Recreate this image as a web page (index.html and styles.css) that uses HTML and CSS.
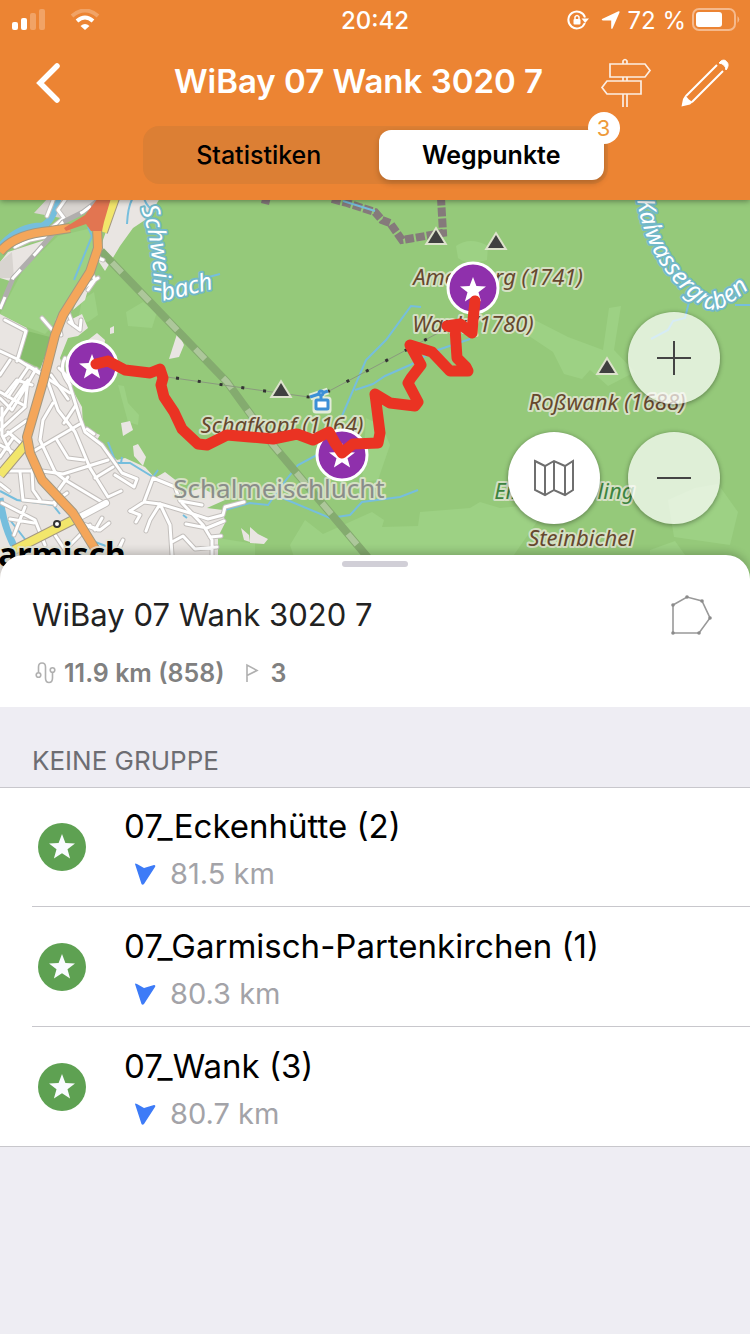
FILE: index.html
```
<!DOCTYPE html>
<html lang="de">
<head>
    <meta charset="UTF-8">
    <meta name="viewport" content="width=device-width, initial-scale=1.0">
    <title>WiBay 07 Wank 3020 7</title>
    <link rel="stylesheet" href="styles.css">
</head>
<body>

    <!-- Shared shapes -->
    <svg class="defs" width="0" height="0" aria-hidden="true">
        <defs>
            <path id="star" d="M0 -13 L3.4 -4 L13 -3.6 L5.5 2.3 L8.1 11.5 L0 6.2 L-8.1 11.5 L-5.5 2.3 L-13 -3.6 L-3.4 -4 Z"/>
            <path id="peak" d="M0 -7 L8 6 H-8 Z"/>
        </defs>
    </svg>

    <header class="header">
        <div class="status-bar">
            <div class="status-left">
                <svg width="34" height="22" viewBox="0 0 34 22" fill="#fff">
                    <rect x="0" y="13" width="6" height="8" rx="2"/>
                    <rect x="9" y="9" width="6" height="12" rx="2"/>
                    <rect x="18" y="4" width="6" height="17" rx="2" opacity=".25"/>
                    <rect x="27" y="0" width="6" height="21" rx="2" opacity=".25"/>
                </svg>
                <svg width="30" height="22" viewBox="0 0 30 22" fill="none" stroke="#fff" stroke-width="4">
                    <path d="M2 7 Q15 -4 28 7" opacity=".25"/>
                    <path d="M7 12 Q15 5 23 12"/>
                    <path d="M15 21 L10.500 17 Q15 13 19.500 17 Z" fill="#fff" stroke="none"/>
                </svg>
            </div>
            <time>20:42</time>
            <div class="status-right">
                <svg width="22" height="20" viewBox="0 0 22 20">
                    <path d="M17.800 13 A8.500 8.500 0 1 1 18 7.500" fill="none" stroke="#fff" stroke-width="2"/>
                    <path d="M14.500 8.500 H22 L18.200 13 Z" fill="#fff"/>
                    <rect x="6.500" y="9" width="7" height="5.500" rx="1" fill="#fff"/>
                    <path d="M8 9 V7 Q10 4 12 7 V9" fill="none" stroke="#fff" stroke-width="1.500"/>
                </svg>
                <svg class="location" width="20" height="20" viewBox="0 0 20 20" fill="#fff"><path d="M1 9 L17.500 1.300 Q19 1 18.500 2.500 L11.500 18.500 Q10.500 19.500 10.200 18 V10.500 H2 Q0 10 1 9 Z"/></svg>
                <span>72 %</span>
                <svg width="48" height="24" viewBox="0 0 48 24">
                    <rect x="1" y="1" width="42" height="21" rx="6" fill="none" stroke="#f5b98c" stroke-width="2"/>
                    <rect x="4" y="4" width="26" height="15" rx="3" fill="#fff"/>
                    <path d="M45.500 8 Q49 11.500 45.500 15 Z" fill="#f5b98c"/>
                </svg>
            </div>
        </div>

        <div class="nav-bar">
            <button type="button" class="nav-btn" aria-label="Zurück">
                <svg width="30" height="44" viewBox="0 0 30 44" fill="none" stroke="#fff" stroke-width="5.500" stroke-linecap="round" stroke-linejoin="miter"><path d="M24 5 L7 22 L24 39"/></svg>
            </button>
            <h1>WiBay 07 Wank 3020 7</h1>
            <div class="nav-actions">
                <button type="button" class="nav-btn" aria-label="Wegweiser">
                    <svg width="52" height="50" viewBox="0 0 52 50" fill="none" stroke="#fbeee4" stroke-width="1.700">
                        <path d="M23 6 V3 Q25 0 27 3 V6 M23 19 V23 M27 19 V23 M23 36 V49 M27 36 V49"/>
                        <path d="M10 6 H45 L50 12.500 L45 19 H10 Z"/>
                        <path d="M41 23 H7 L2 29.500 L7 36 H41 Z"/>
                    </svg>
                </button>
                <button type="button" class="nav-btn" aria-label="Bearbeiten">
                    <svg width="50" height="50" viewBox="0 0 50 50" fill="none" stroke="#fff" stroke-width="2">
                        <path d="M37 7 L6 38 M43 13 L12 44"/>
                        <path d="M5.500 37 Q8 42 13 44 L10 46.500 L1.500 48.500 L3 41 Z" fill="#fff" stroke="none"/>
                        <path d="M39 5 Q43 0 46.500 3.500 Q50 7 46 12 Q45.500 6 39 5 Z" fill="#fff" stroke-width="1"/>
                    </svg>
                </button>
            </div>
        </div>

        <div class="segmented">
            <button type="button" class="segment">Statistiken</button>
            <button type="button" class="segment active">Wegpunkte</button>
            <span class="badge">3</span>
        </div>
    </header>

    <!-- Map -->
    <section class="map">
        <svg class="map-canvas" viewBox="0 200 750 380" preserveAspectRatio="xMidYMid slice" role="img" aria-label="Karte">
            <defs>
                <path id="lbl-schwein" d="M141 208 Q155 245 155 320"/>
                <path id="lbl-bach" d="M163 301 L230 285"/>
                <path id="lbl-kal" d="M637 200 C643 245 668 280 692 299 S722 316 790 250"/>
                <g id="streets">
                    <path d="M5 320 L26 331 L17 361 M0 351 L17 359 L70 393 M0 375 L10 360 M36 369 L24 390 L12 410 L0 398 M29 366 L8 397 M45 375 L25 364 M0 420 L27 381 M0 392 L25 406 L28 380"/>
                    <path d="M2 408 V435 L12 455 M0 430 L25 407 M5 436 L26 421 M0 445 L18 455 L26 441 M8 432 L24 446 M0 457 L13 438 M5 395 L17 380 L32 385"/>
                    <path d="M48 382 L58 410 L75 432 L90 468 L108 497 L121 491 M53 403 L43 420 L40 440 L55 472 L65 480 L105 504 L74 519"/>
                    <path d="M68 380 L80 418 L85 432 L102 445 L122 473 L137 479 L134 487 L115 475 M76 405 L64 423 M87 429 L94 434"/>
                    <path d="M32 452 L80 424 M57 440 L68 458 L84 460 M42 471 L63 474 L108 460 M95 478 L113 467 M68 477 L57 492 L55 505"/>
                    <path d="M7 471 H33 M20 472 L23 500 L53 503 L67 493 M32 470 L33 490 L40 500 M0 484 L9 491 M2 503 L35 520 L45 545 M10 519 L34 523 M25 507 L14 535"/>
                    <path d="M55 535 L65 550 L90 525 M75 521 L100 530 L109 523 M102 518 L95 530 M85 525 L98 530 M123 540 L116 556 M105 575 L123 540"/>
                    <path d="M153 478 L144 502 L130 511 M153 478 L175 487 L180 501 L202 505 M144 502 L160 504 L190 513 L208 519 L223 515 L225 507 L244 502"/>
                    <path d="M160 504 L150 520 L146 531 M160 504 L170 525 L172 555 M186 524 L207 528 L224 521 M172 542 L183 536 L195 549 L217 547 M182 503 L203 525 L212 540 V560 M130 511 L140 515 L136 522 M221 536 L210 537"/>
                    <path d="M51 375 L68 399 M59 368 L73 382 M73 325 L68 312 L58 320 L61 335 M42 318 L55 333 M69 322 L80 330 L81 320 M98 258 L103 260 M90 270 L95 280 L88 290 M83 288 L98 278 M65 358 Q58 370 70 385"/>
                    <path d="M47 216 L54 198 M50 229 L64 218 L58 210 L65 200 M15 247 L30 240 L50 236 L58 225 M105 198 L98 212"/>
                </g>
            </defs>

            <!-- Forest and meadows -->
            <rect class="forest" x="0" y="200" width="750" height="380"/>
            <g class="meadow">
                <path d="M58 236 L92 228 L97 255 L58 320 L45 334 L27 327 L0 314 L24 268 Z"/>
                <path d="M82 300 L94 292 L98 315 L88 322 L78 320 Z M126 312 L143 302 L157 312 L152 328 L128 326 Z"/>
                <path d="M118 385 L124 386 L128 403 L139 415 L138 425 L128 422 Z"/>
                <path d="M456 246 Q470 236 488 246 L487 260 Q468 266 458 258 Z"/>
                <path d="M525 315 L568 337 L603 350 L609 308 L621 306 L614 350 L635 372 L608 386 L590 370 L582 379 L564 374 L553 352 L520 330 Z"/>
                <path d="M305 520 L323 534 L372 512 L384 520 L382 527 L418 526 L420 512 L470 508 L480 502 L500 508 L550 503 L500 575 H300 L290 545 Z"/>
                <path d="M366 418 L382 426 L390 445 L378 480 L362 482 Z"/>
                <path d="M668 500 L695 488 L718 484 L738 512 L730 545 L674 537 Z M650 550 L675 541 L685 555 L680 575 H650 Z"/>
                <path d="M218 538 L255 544 V580 H218 Z"/>
            </g>
            <g class="wood">
                <path d="M27 331 L50 337 L45 370 L18 358 Z"/>
            </g>

            <!-- Built-up land -->
            <g class="town">
                <path d="M0 314 L27 328 L18 358 L40 370 L58 320 L66 302 L72 305 L70 320 L82 314 L88 328 L78 336 L68 338 L60 358 L67 380 L82 407 L83 427 L100 435 L97 440 L117 460 L125 458 L145 467 L155 478 L165 472 L178 482 L181 494 L202 488 L225 500 L207 508 L223 510 L225 523 L218 537 V580 H0 Z"/>
                <path d="M0 262 L8 252 L45 240 L40 250 L20 268 L10 281 L0 278 Z"/>
                <path d="M118 198 H160 L148 218 L133 228 L120 246 L105 271 L99 262 L103 240 Z M98 255 L85 300 L73 310 L92 262 Z"/>
                <path d="M88 340 L97 333 L105 340 L104 350 L86 348 Z M110 328 L114 326 L114 333 L110 334 Z"/>
                <path d="M177 334 L181 338 L184 345 L179 357 L169 359 Z"/>
                <path d="M121 423 L130 421 L133 430 L123 436 Z M133 446 L138 444 L146 457 L143 466 L134 456 Z M72 402 L80 404 V412 Z M250 527 L258 534 L268 539 L264 544 L250 543 Z M241 528 L249 535 L250 542 L244 540 Z"/>
            </g>
            <path class="industry" d="M48 198 H98 L72 220 L34 213 Z M0 262 L12 252 L14 278 L0 278 Z"/>

            <!-- Water -->
            <path class="river" d="M0 247 Q18 226 42 226 Q53 222 58 198"/>
            <path class="river" d="M0 498 Q3 525 15 548"/>
            <g class="stream">
                <path d="M88 227 L92 236 L74 280 M133 198 Q128 205 127 224 M144 198 Q146 206 155 212 M205 278 L220 274"/>
                <path d="M108 442 L116 463 H130 L153 477 L158 470 M121 463 L122 457 M0 491 L17 500 L53 505 L60 514 M10 520 L28 543 M95 542 L106 546 M183 515 L187 518"/>
                <path d="M421 307 L411 306 L386 340 L366 360 L342 416 M470 339 L432 352 L410 365 L385 376 L373 384 L355 390 M330 448 L298 465 L282 485 L268 505 L250 503 L225 510 M280 497 L330 518 L350 515 L362 502 L400 497 L418 490"/>
                <path d="M633 198 L641 202 M690 298 L685 318 L673 321 L668 330 L651 339 M735 305 H750"/>
            </g>

            <!-- Gas corridor and district border -->
            <path class="corridor" d="M101 251 L227 382 L273 445 L370 560"/>
            <path class="corridor-dash" d="M101 251 L227 382 L273 445 L370 560"/>
            <path class="border" d="M332 199 L347 203 L375 212 L382 220 L390 223 L402 240 L443 233 L441 198"/>
            <path class="stream" d="M343 201 L375 211"/>
            <path class="border" d="M262 199 L270 201"/>

            <!-- Roads -->
            <use href="#streets" class="street-case"/>
            <use href="#streets" class="street"/>
            <path class="rail" d="M0 309 L13 278 L37 252 L63 222 L83 212 L100 199"/>
            <path class="rail-dash" d="M0 309 L13 278 L37 252 L63 222 L83 212 L100 199"/>
            <path class="road-case" d="M27 443 L0 475 M14 550 L73 520 M115 198 L103 232"/>
            <path class="road yellow" d="M27 443 L0 475 M14 550 L73 520 M115 198 L103 232"/>
            <path class="street-case wide" d="M76 519 L106 503"/>
            <path class="street wide" d="M76 519 L106 503"/>
            <path class="road-case" d="M0 252 Q15 234 50 231 L70 228 M97 228 L98 248 L90 272 L63 315 L55 335 L43 382 L27 437 L30 453 L42 480 L73 513 L97 552"/>
            <path class="road orange" d="M0 252 Q15 234 50 231 L70 228 M97 228 L98 248 L90 272 L63 315 L55 335 L43 382 L27 437 L30 453 L42 480 L73 513 L97 552"/>
            <path class="junction" d="M64 228 L85 215 L98 198 H111 L104 222 L102 231 H91 L86 224 L66 231 Z"/>

            <!-- Cable car -->
            <path class="cable" d="M160 376 L265 391 L316 398 L440 332"/>
            <path class="cable-dots" d="M176 378 L265 391 L316 398 L440 332"/>
            <g class="gondola-halo">
                <path d="M310 397 L328 391 M321 393 V400 M316 400 H328 V410 H316 Z"/>
            </g>
            <g class="gondola">
                <path d="M310 397 L328 391 M321 393 V400"/>
                <rect x="316" y="400" width="12" height="9" rx="1"/>
                <circle cx="321" cy="393" r="2"/>
            </g>

            <!-- Peaks -->
            <g class="peaks">
                <use href="#peak" x="436" y="237"/>
                <use href="#peak" x="496" y="242"/>
                <use href="#peak" x="607" y="367"/>
                <use href="#peak" x="281" y="390"/>
            </g>

            <!-- Labels -->
            <g class="label">
                <text x="498" y="285">Ameisberg (1741)</text>
                <text x="473" y="332">Wank (1780)</text>
                <text x="282" y="433">Schafkopf (1164)</text>
                <text x="607" y="410">Roßwank (1688)</text>
                <text x="581" y="546">Steinbichel</text>
            </g>
            <g class="label hut">
                <text x="509" y="499">Ein</text>
                <text x="616" y="499">ling</text>
            </g>
            <text class="label valley" x="279" y="498">Schalmeischlucht</text>
            <g class="label water">
                <text><textPath href="#lbl-schwein">Schwein</textPath></text>
                <text><textPath href="#lbl-bach">bach</textPath></text>
                <text><textPath href="#lbl-kal">Kalwassergraben</textPath></text>
            </g>
            <text class="label city" x="62" y="566">armisch</text>
            <circle class="place" cx="57" cy="524" r="3"/>

            <!-- Waypoints and track -->
            <g class="waypoint">
                <circle cx="92" cy="366" r="25"/>
                <circle cx="473" cy="288" r="25"/>
                <circle cx="342" cy="455" r="25"/>
                <use href="#star" x="92" y="367"/>
                <use href="#star" x="473" y="290"/>
                <use href="#star" x="342" y="456"/>
            </g>
            <path class="track" d="M96 364 L108 361 L125 370 L150 373 L160 369 L163 378 L161 385 L164 397 L174 412 L182 429 L198 444 L207 445 L227 435 L250 437 L273 439 L297 434 L313 440 L329 432 L335 443 L342 453 L353 444 L378 443 L380 433 L375 394 L390 403 L415 406 L418 402 L408 383 L411 378 L421 365 L410 345 L432 352 L450 371 L468 371 L466 367 L457 358 L455 328 L447 326 L460 324 L472 333 L473 320 L475 301"/>
        </svg>

        <div class="map-controls">
            <button type="button" class="round-btn zoom-in" aria-label="Vergrößern">
                <svg width="34" height="34" viewBox="0 0 34 34" stroke="#444" stroke-width="2"><path d="M17 0 V34 M0 17 H34"/></svg>
            </button>
            <button type="button" class="round-btn solid" aria-label="Kartenauswahl">
                <svg width="40" height="38" viewBox="0 0 40 38" fill="none" stroke="#6f6f6f" stroke-width="2"><path d="M1 2 L11 7 L20 2 L31 7 L39 2 V31 L31 36 L20 31 L11 36 L1 31 Z M11 7 V36 M20 2 V31 M31 7 V36"/></svg>
            </button>
            <button type="button" class="round-btn" aria-label="Verkleinern">
                <svg width="34" height="34" viewBox="0 0 34 34" stroke="#444" stroke-width="2"><path d="M0 17 H34"/></svg>
            </button>
        </div>
    </section>

    <!-- Bottom sheet -->
    <main class="sheet">
        <div class="grabber"></div>
        <section class="summary">
            <div>
                <h2>WiBay 07 Wank 3020 7</h2>
                <p class="stats">
                    <svg width="21" height="22" viewBox="0 0 21 22" fill="none" stroke="#b0b0b0" stroke-width="1.600">
                        <circle cx="3.500" cy="13" r="2.300"/><circle cx="17.500" cy="8" r="2.300"/>
                        <path d="M3.500 10.500 V5 Q3.500 1 7 1 Q10.500 1 10.500 5 V16 Q10.500 20.500 14 20.500 Q17.500 20.500 17.500 16 V10.500"/>
                    </svg>
                    <span>11.9 km (858)</span>
                    <svg class="flag" width="14" height="20" viewBox="0 0 14 20" fill="none" stroke="#b0b0b0" stroke-width="1.600"><path d="M2 19 V2 L12 7.500 L2 12.500"/></svg>
                    <span>3</span>
                </p>
            </div>
            <button type="button" class="shape-btn" aria-label="Form">
                <svg width="42" height="42" viewBox="0 0 42 42" fill="none" stroke="#999" stroke-width="1.600">
                    <path d="M3 10 L17 2 L32 6 L40 23 L29 38 H3 Z"/>
                    <g fill="#8b8b8b" stroke="none"><circle cx="3" cy="10" r="1.800"/><circle cx="17" cy="2" r="1.800"/><circle cx="32" cy="6" r="1.800"/><circle cx="40" cy="23" r="1.800"/><circle cx="29" cy="38" r="1.800"/><circle cx="3" cy="38" r="1.800"/></g>
                </svg>
            </button>
        </section>

        <h3>KEINE GRUPPE</h3>
        <ul class="waypoints">
            <li>
                <svg class="icon" width="48" height="48" viewBox="-24 -24 48 48"><circle r="24" fill="#5ea152"/><use href="#star" fill="#f8fbff"/></svg>
                <div class="entry">
                    <span class="name">07_Eckenhütte (2)</span>
                    <span class="distance"><svg width="22" height="22" viewBox="0 0 22 22"><path d="M1 1 Q1 0 3 1 L10 5 L20 2 Q22 2 21 4 L10 21 Q8.500 22.500 7.500 21 Z" fill="#3d7bf7"/></svg>81.5 km</span>
                </div>
            </li>
            <li>
                <svg class="icon" width="48" height="48" viewBox="-24 -24 48 48"><circle r="24" fill="#5ea152"/><use href="#star" fill="#f8fbff"/></svg>
                <div class="entry">
                    <span class="name">07_Garmisch-Partenkirchen (1)</span>
                    <span class="distance"><svg width="22" height="22" viewBox="0 0 22 22"><path d="M1 1 Q1 0 3 1 L10 5 L20 2 Q22 2 21 4 L10 21 Q8.500 22.500 7.500 21 Z" fill="#3d7bf7"/></svg>80.3 km</span>
                </div>
            </li>
            <li>
                <svg class="icon" width="48" height="48" viewBox="-24 -24 48 48"><circle r="24" fill="#5ea152"/><use href="#star" fill="#f8fbff"/></svg>
                <div class="entry">
                    <span class="name">07_Wank (3)</span>
                    <span class="distance"><svg width="22" height="22" viewBox="0 0 22 22"><path d="M1 1 Q1 0 3 1 L10 5 L20 2 Q22 2 21 4 L10 21 Q8.500 22.500 7.500 21 Z" fill="#3d7bf7"/></svg>80.7 km</span>
                </div>
            </li>
        </ul>
    </main>

</body>
</html>
```
FILE: styles.css
```
* {
    box-sizing: border-box;
}

body {
    margin: 0;
    min-height: 100vh;
    background-color: #eeedf3;
    font-family: Inter, "Liberation Sans", sans-serif;
    color: #000;
}

h1, h2, h3, p, ul {
    margin: 0;
    padding: 0;
}

button {
    padding: 0;
    border: none;
    background: none;
    font-family: inherit;
    color: inherit;
    cursor: pointer;
}

svg {
    display: block;
    flex-shrink: 0;
}

.defs {
    position: absolute;
}

/* Header */
.header {
    position: relative;
    z-index: 1;
    padding-bottom: 16px;
    background-color: #ec8433;
    color: #fff;
    box-shadow: 0 1px 6px rgba(0, 0, 0, 0.4);
}

.status-bar {
    display: grid;
    grid-template-columns: 1fr auto 1fr;
    align-items: center;
    height: 40px;
    padding: 0 12px;
    font-size: 24px;
}

.status-bar time {
    font-weight: 500;
}

.status-left {
    display: flex;
    align-items: center;
    gap: 24px;
}

.status-right {
    display: flex;
    align-items: center;
    justify-content: flex-end;
    gap: 6px;
    margin-right: -2px;
}

.location {
    margin-left: 6px;
}

.nav-bar {
    display: grid;
    grid-template-columns: 84px 1fr auto;
    align-items: center;
    height: 86px;
    padding: 0 20px 0 33px;
}

.nav-btn {
    justify-self: start;
}

.nav-bar h1 {
    padding-bottom: 4px;
    font-size: 33px;
    font-weight: 600;
    text-align: center;
    white-space: nowrap;
}

.nav-actions {
    display: flex;
    justify-content: flex-end;
    gap: 28px;
}

.segmented {
    position: relative;
    display: grid;
    grid-template-columns: 1fr 1fr;
    gap: 8px;
    width: 62%;
    margin: 0 auto;
    padding: 4px;
    border-radius: 16px;
    background-color: #dc7f34;
}

.segment {
    height: 50px;
    border-radius: 12px;
    font-size: 25px;
    font-weight: 500;
    color: #000;
}

.segment.active {
    background-color: #fff;
    font-weight: 600;
    box-shadow: 0 3px 6px rgba(0, 0, 0, 0.2);
}

.badge {
    position: absolute;
    top: -14px;
    right: -12px;
    width: 32px;
    border-radius: 16px;
    background-color: #fff;
    color: #ee9a3a;
    font-size: 22px;
    line-height: 32px;
    text-align: center;
}

/* Map */
.map {
    position: relative;
    height: 380px;
}

.map-canvas {
    width: 100%;
    height: 100%;
}

.forest { fill: #95c97a; }
.meadow { fill: #9dd184; }
.wood { fill: #86bd6b; }
.town { fill: #e9e5e2; }
.industry { fill: #d8d4d0; }

.river, .stream {
    fill: none;
    stroke: #76bedd;
    stroke-width: 2;
}

.river {
    stroke-width: 7;
}

.corridor, .corridor-dash {
    fill: none;
    stroke: #84ab6f;
    stroke-width: 8;
}

.corridor-dash {
    stroke: #adc79b;
    stroke-width: 6;
    stroke-dasharray: 14 26;
    stroke-dashoffset: 24;
}

.border {
    fill: none;
    stroke: #857a7b;
    stroke-width: 8;
    stroke-dasharray: 9 2;
}

.street, .street-case {
    fill: none;
    stroke: #fff;
    stroke-width: 3;
    stroke-linecap: round;
    stroke-linejoin: round;
}

.street-case {
    stroke: #c3bfbc;
    stroke-width: 5;
}

.street.wide { stroke-width: 6; }
.street-case.wide { stroke-width: 8; }

.rail, .rail-dash {
    fill: none;
    stroke: #b0aead;
    stroke-width: 5;
}

.rail-dash {
    stroke: #fff;
    stroke-width: 3;
    stroke-dasharray: 13 19;
}

.road, .road-case {
    fill: none;
    stroke-linejoin: round;
    stroke-width: 8;
}

.road-case {
    stroke: #a49880;
    stroke-width: 10;
}

.orange { stroke: #f4a65a; }
.yellow { stroke: #f2e66b; }
.junction { fill: #e27551; }

.cable, .cable-dots {
    fill: none;
    stroke: #8a9a7e;
    stroke-width: 1;
}

.cable-dots {
    stroke: #333;
    stroke-width: 3;
    stroke-dasharray: 3 19;
}

.gondola {
    fill: #fff;
    stroke: #3c8fd6;
    stroke-width: 3;
}

.gondola-halo {
    fill: none;
    stroke: #e3ecd9;
    stroke-width: 7;
    stroke-linejoin: round;
}

.peaks {
    fill: #404040;
    stroke: #dde2cc;
    stroke-width: 4;
    paint-order: stroke;
}

.label {
    fill: #66482e;
    stroke: rgba(230, 231, 216, 0.8);
    stroke-width: 4;
    stroke-linejoin: round;
    paint-order: stroke;
    font-family: "Noto Sans", sans-serif;
    font-size: 22px;
    font-style: italic;
    text-anchor: middle;
}

.label.hut { fill: #3d8540; }

.label.valley {
    fill: #8a8d8a;
    font-size: 26px;
    font-style: normal;
}

.label.water {
    fill: #fff;
    stroke: #72b8c8;
    font-size: 24px;
    text-anchor: start;
}

.label.city {
    fill: #000;
    font-size: 32px;
    font-style: normal;
    font-weight: 700;
}

.place {
    fill: #fff;
    stroke: #333;
    stroke-width: 2;
}

.waypoint {
    fill: #fff;
}

.waypoint circle {
    fill: #8f30ac;
    stroke: #fff;
    stroke-width: 3;
}

.track {
    fill: none;
    stroke: #ea3323;
    stroke-width: 11;
    stroke-linecap: round;
    stroke-linejoin: round;
}

.map-controls {
    position: absolute;
    top: 112px;
    right: 30px;
    display: grid;
    grid-template-columns: 92px 92px;
    gap: 28px;
}

.round-btn {
    display: flex;
    align-items: center;
    justify-content: center;
    height: 92px;
    border-radius: 50%;
    background-color: rgba(255, 255, 255, 0.7);
    box-shadow: 0 1px 5px rgba(0, 0, 0, 0.4);
}

.zoom-in {
    grid-column: 2;
}

.round-btn.solid {
    background-color: #fff;
}

/* Bottom sheet */
.sheet {
    position: relative;
    margin-top: -25px;
}

.grabber {
    display: flex;
    height: 24px;
    padding-top: 6px;
    justify-content: center;
    border-radius: 24px 24px 0 0;
    background-color: #fff;
    box-shadow: 0 -3px 8px rgba(0, 0, 0, 0.2);
}

.grabber::before {
    content: "";
    width: 66px;
    height: 6px;
    border-radius: 3px;
    background-color: #d1cfd7;
}

.summary {
    position: relative;
    display: flex;
    justify-content: space-between;
    padding: 16px 38px 18px 32px;
    background-color: #fff;
}

.summary h2 {
    color: #222;
    font-size: 31px;
    font-weight: 400;
    line-height: 40px;
}

.stats {
    display: flex;
    align-items: center;
    gap: 8px;
    margin-top: 22px;
    padding-left: 3px;
    color: #808080;
    font-size: 25px;
    font-weight: 600;
    line-height: 32px;
}

.flag {
    margin: 0 4px 0 12px;
}

.shape-btn {
    align-self: flex-start;
}

h3 {
    padding: 36px 32px 8px;
    color: #6d6d72;
    font-size: 26px;
    font-weight: 400;
    line-height: 36px;
}

.waypoints {
    list-style: none;
    border-bottom: 1px solid #c8c7cc;
    background-color: #fff;
    box-shadow: inset 0 1px 0 #c8c7cc;
}

.waypoints li {
    display: flex;
    align-items: center;
    gap: 38px;
    height: 120px;
    margin-left: 32px;
    padding-left: 6px;
    border-bottom: 1px solid #c8c7cc;
}

.waypoints li:last-child {
    height: 119px;
    border-bottom: none;
}

.entry {
    display: flex;
    flex-direction: column;
    gap: 8px;
    padding-top: 6px;
}

.name {
    font-size: 33px;
    line-height: 40px;
}

.distance {
    display: flex;
    align-items: center;
    gap: 14px;
    padding-left: 10px;
    color: #a3a3a8;
    font-size: 29px;
    line-height: 40px;
}
```
